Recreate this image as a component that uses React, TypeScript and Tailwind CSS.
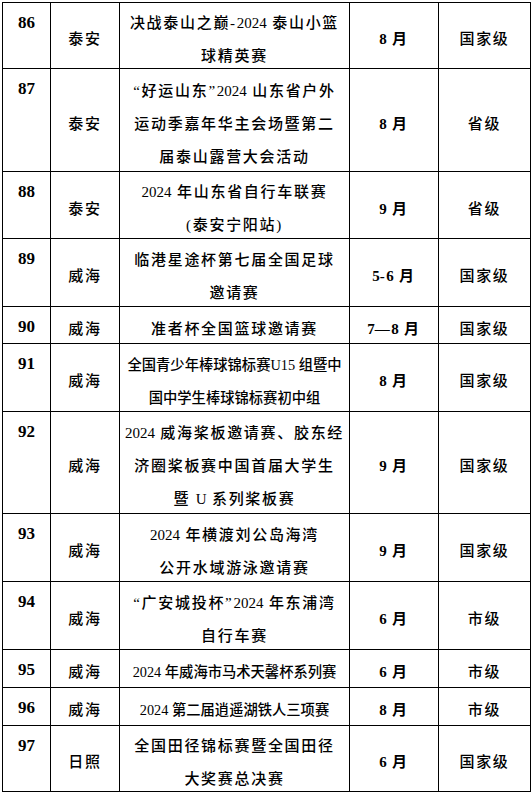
import React from 'react';

interface EventRow {
  no: number;
  city: string;
  lines: string[];
  month: string;
  level: string;
  tight?: boolean;
}

const rows: EventRow[] = [
  { no: 86, city: '泰安', lines: ['决战泰山之巅-2024 泰山小篮', '球精英赛'], month: '8 月', level: '国家级' },
  { no: 87, city: '泰安', lines: ['“好运山东”2024 山东省户外', '运动季嘉年华主会场暨第二', '届泰山露营大会活动'], month: '8 月', level: '省级' },
  { no: 88, city: '泰安', lines: ['2024 年山东省自行车联赛', '(泰安宁阳站)'], month: '9 月', level: '省级' },
  { no: 89, city: '威海', lines: ['临港星途杯第七届全国足球', '邀请赛'], month: '5-6 月', level: '国家级' },
  { no: 90, city: '威海', lines: ['准者杯全国篮球邀请赛'], month: '7—8 月', level: '国家级' },
  { no: 91, city: '威海', lines: ['全国青少年棒球锦标赛U15 组暨中', '国中学生棒球锦标赛初中组'], month: '8 月', level: '国家级', tight: true },
  { no: 92, city: '威海', lines: ['2024 威海桨板邀请赛、胶东经', '济圈桨板赛中国首届大学生', '暨 U 系列桨板赛'], month: '9 月', level: '国家级' },
  { no: 93, city: '威海', lines: ['2024 年横渡刘公岛海湾', '公开水域游泳邀请赛'], month: '9 月', level: '国家级' },
  { no: 94, city: '威海', lines: ['“广安城投杯”2024 年东浦湾', '自行车赛'], month: '6 月', level: '市级' },
  { no: 95, city: '威海', lines: ['2024 年威海市马术天馨杯系列赛'], month: '6 月', level: '市级', tight: true },
  { no: 96, city: '威海', lines: ['2024 第二届逍遥湖铁人三项赛'], month: '8 月', level: '市级', tight: true },
  { no: 97, city: '日照', lines: ['全国田径锦标赛暨全国田径', '大奖赛总决赛'], month: '6 月', level: '国家级' },
];

const font = { fontFamily: '"Liberation Serif", "Noto Sans CJK SC", serif' };

// latin / digit runs keep normal spacing, CJK gets the wide tracking
function Spaced({ text }: { text: string }) {
  const parts = text.split(/([0-9A-Za-z]+)/);
  return (
    <>
      {parts.map((p, i) =>
        /^[0-9A-Za-z]+$/.test(p) ? (
          <span key={i} className="tracking-normal">
            {p}
          </span>
        ) : (
          <React.Fragment key={i}>{p}</React.Fragment>
        )
      )}
    </>
  );
}

export default function App() {
  return (
    <div className="w-[532px] h-[794px] bg-white pt-[2px] pl-[2px] text-black" style={font}>
      <div className="inline-grid grid-cols-[47px_68px_229px_88px_91px] grid-rows-[65px_102px_66px_67px_36px_67px_101px_67px_67px_37px_37px_65px] gap-px bg-black p-px">
        {rows.map((r) => (
          <React.Fragment key={r.no}>
            {/* number sits at the top of its cell */}
            <div className="bg-white flex justify-center pt-[3px] text-[17px] font-bold leading-[33px]">
              {r.no}
            </div>
            <div className="bg-white flex items-center justify-center pt-2 text-[15px] font-medium leading-[33px] tracking-[1.7px]">
              {r.city}
            </div>
            <div
              className={`bg-white flex flex-col items-center justify-center pt-2 font-medium leading-[33px] whitespace-nowrap ${
                r.tight ? 'text-[14.3px] tracking-normal' : 'text-[15px] tracking-[1.7px]'
              }`}
            >
              {r.lines.map((l, i) => (
                <span key={i}>
                  <Spaced text={l} />
                </span>
              ))}
            </div>
            <div className="bg-white flex items-center justify-center pt-2 text-[15px] font-bold leading-[33px] tracking-[1.5px]">
              <span>
                <Spaced text={r.month} />
              </span>
            </div>
            <div className="bg-white flex items-center justify-center pt-2 text-[15px] font-medium leading-[33px] tracking-[1.7px]">
              {r.level}
            </div>
          </React.Fragment>
        ))}
      </div>
    </div>
  );
}
